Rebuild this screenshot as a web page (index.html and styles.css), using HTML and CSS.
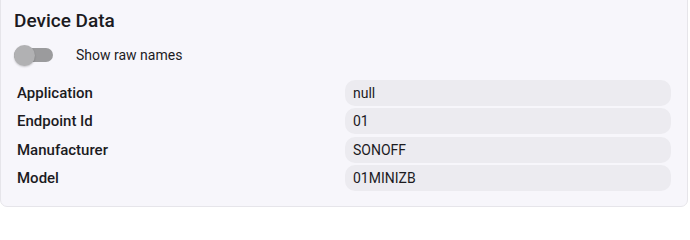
FILE: index.html
```html
<!DOCTYPE html>
<html>
<head>
<meta charset="utf-8">
<link rel="stylesheet" href="styles.css">
</head>
<body>
<div class="card">
  <h2 class="title">Device Data</h2>
  <div class="toggle-row">
    <span class="switch"><span class="track"></span><span class="thumb"></span></span>
    <span class="toggle-label">Show raw names</span>
  </div>
  <div class="table">
    <div class="label">Application</div><div class="value">null</div>
    <div class="label">Endpoint Id</div><div class="value">01</div>
    <div class="label">Manufacturer</div><div class="value">SONOFF</div>
    <div class="label">Model</div><div class="value">01MINIZB</div>
  </div>
</div>
</body>
</html>
```
FILE: styles.css
```css
html, body {
  margin: 0;
  padding: 0;
  background: #ffffff;
}
body {
  font-family: Roboto, "Liberation Sans", sans-serif;
  color: #1c1b1f;
}
.card {
  box-sizing: border-box;
  width: 688px;
  margin-top: -8px;
  background: #f7f6fb;
  border: 1px solid #e6e5ea;
  border-radius: 7px;
  padding: 16px 13px 15px 13px;
}
.title {
  margin: 0;
  font-size: 19px;
  font-weight: 500;
  line-height: 24px;
}
.toggle-row {
  display: flex;
  align-items: center;
  gap: 22px;
  margin-top: 11px;
  height: 22px;
}
.switch {
  position: relative;
  width: 40px;
  height: 22px;
  flex: none;
}
.track {
  position: absolute;
  left: 0;
  top: 4px;
  width: 39px;
  height: 14px;
  border-radius: 7px;
  background: #9b9b9d;
}
.thumb {
  position: absolute;
  left: 0;
  top: 1px;
  width: 21px;
  height: 21px;
  border-radius: 50%;
  background: #b1b1b3;
  box-shadow: 0 1px 2px rgba(0,0,0,0.2);
}
.toggle-label {
  font-size: 14px;
  line-height: 20px;
}
.table {
  display: grid;
  grid-template-columns: 1fr 1fr;
  row-gap: 2.5px;
  margin-top: 13.5px;
  padding: 0 3px;
}
.label {
  font-size: 15px;
  font-weight: 500;
  line-height: 26px;
}
.value {
  margin-left: 1px;
  font-size: 14px;
  line-height: 26px;
  height: 26px;
  padding: 0 8px;
  background: #ecebf0;
  border-radius: 10px;
}
```
